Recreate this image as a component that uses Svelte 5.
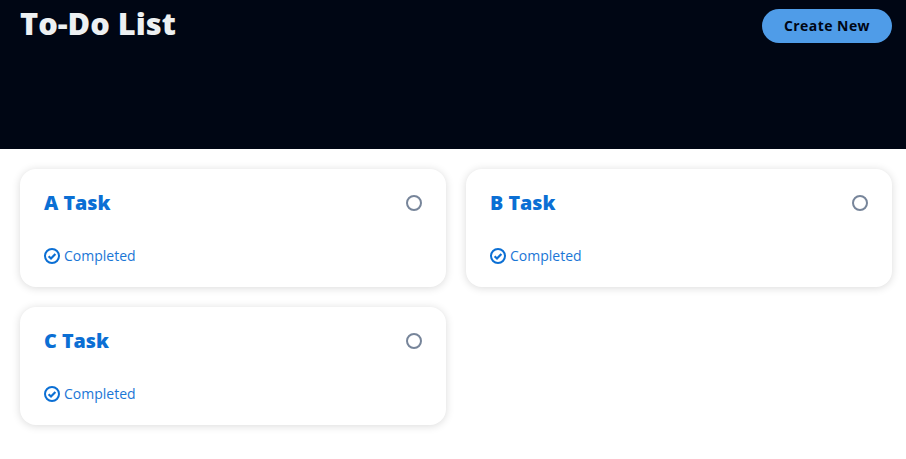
<script>
  const tasks = [{ title: 'A Task' }, { title: 'B Task' }, { title: 'C Task' }]
</script>

<header class="header">
  <h1>To-Do List</h1>
  <button class="create"><span>Create New</span></button>
</header>

<main class="grid">
  {#each tasks as task}
    <div class="card">
      <div class="top">
        <h2>{task.title}</h2>
        <span class="radio"></span>
      </div>
      <div class="status">
        <svg width="16" height="16" viewBox="0 0 16 16" fill="none" stroke="currentColor">
          <circle cx="8" cy="8" r="7" stroke-width="2" />
          <path d="M4.6 8.2l2.4 2.3 4.4-4.5" stroke-width="2.2" />
        </svg>
        <span>Completed</span>
      </div>
    </div>
  {/each}
</main>

<style>
  :global(body) {
    margin: 0;
    background: #fff;
    font-family: 'Open Sans', sans-serif;
  }

  .header {
    height: 149px;
    box-sizing: border-box;
    background: #000614;
    padding: 9px 14px 0 20px;
    display: flex;
    justify-content: space-between;
    align-items: flex-start;
  }

  h1 {
    margin: -8px 0 0;
    font-size: 30.8px;
    line-height: 44px;
    font-weight: 800;
    color: #edf0f2;
  }

  .create {
    width: 130px;
    height: 34px;
    border: none;
    border-radius: 17px;
    background: #4f9ce8;
    color: #000614;
    font-family: inherit;
    font-size: 14px;
    font-weight: 700;
    letter-spacing: 0.45px;
    padding: 0 0 2px;
  }

  .grid {
    display: grid;
    grid-template-columns: 1fr 1fr;
    gap: 20px;
    padding: 20px 14px 34px 20px;
  }

  .card {
    height: 118px;
    box-sizing: border-box;
    background: #fff;
    border-radius: 16px;
    box-shadow: 0 1px 8px rgba(0, 0, 0, 0.15);
    padding: 20px 24px;
    display: flex;
    flex-direction: column;
    justify-content: space-between;
  }

  .top {
    display: flex;
    justify-content: space-between;
    align-items: center;
  }

  h2 {
    margin: 0;
    font-size: 19.7px;
    line-height: 28px;
    font-weight: 800;
    color: #0b6fd4;
  }

  .radio {
    width: 16px;
    height: 16px;
    box-sizing: border-box;
    border: 2px solid #77859a;
    border-radius: 50%;
  }

  .status {
    display: flex;
    align-items: center;
    gap: 4px;
    color: #1a76d6;
    font-size: 14px;
    line-height: 20px;
    margin-bottom: 1px;
  }

  .status svg {
    color: #0b6fd4;
  }
</style>
